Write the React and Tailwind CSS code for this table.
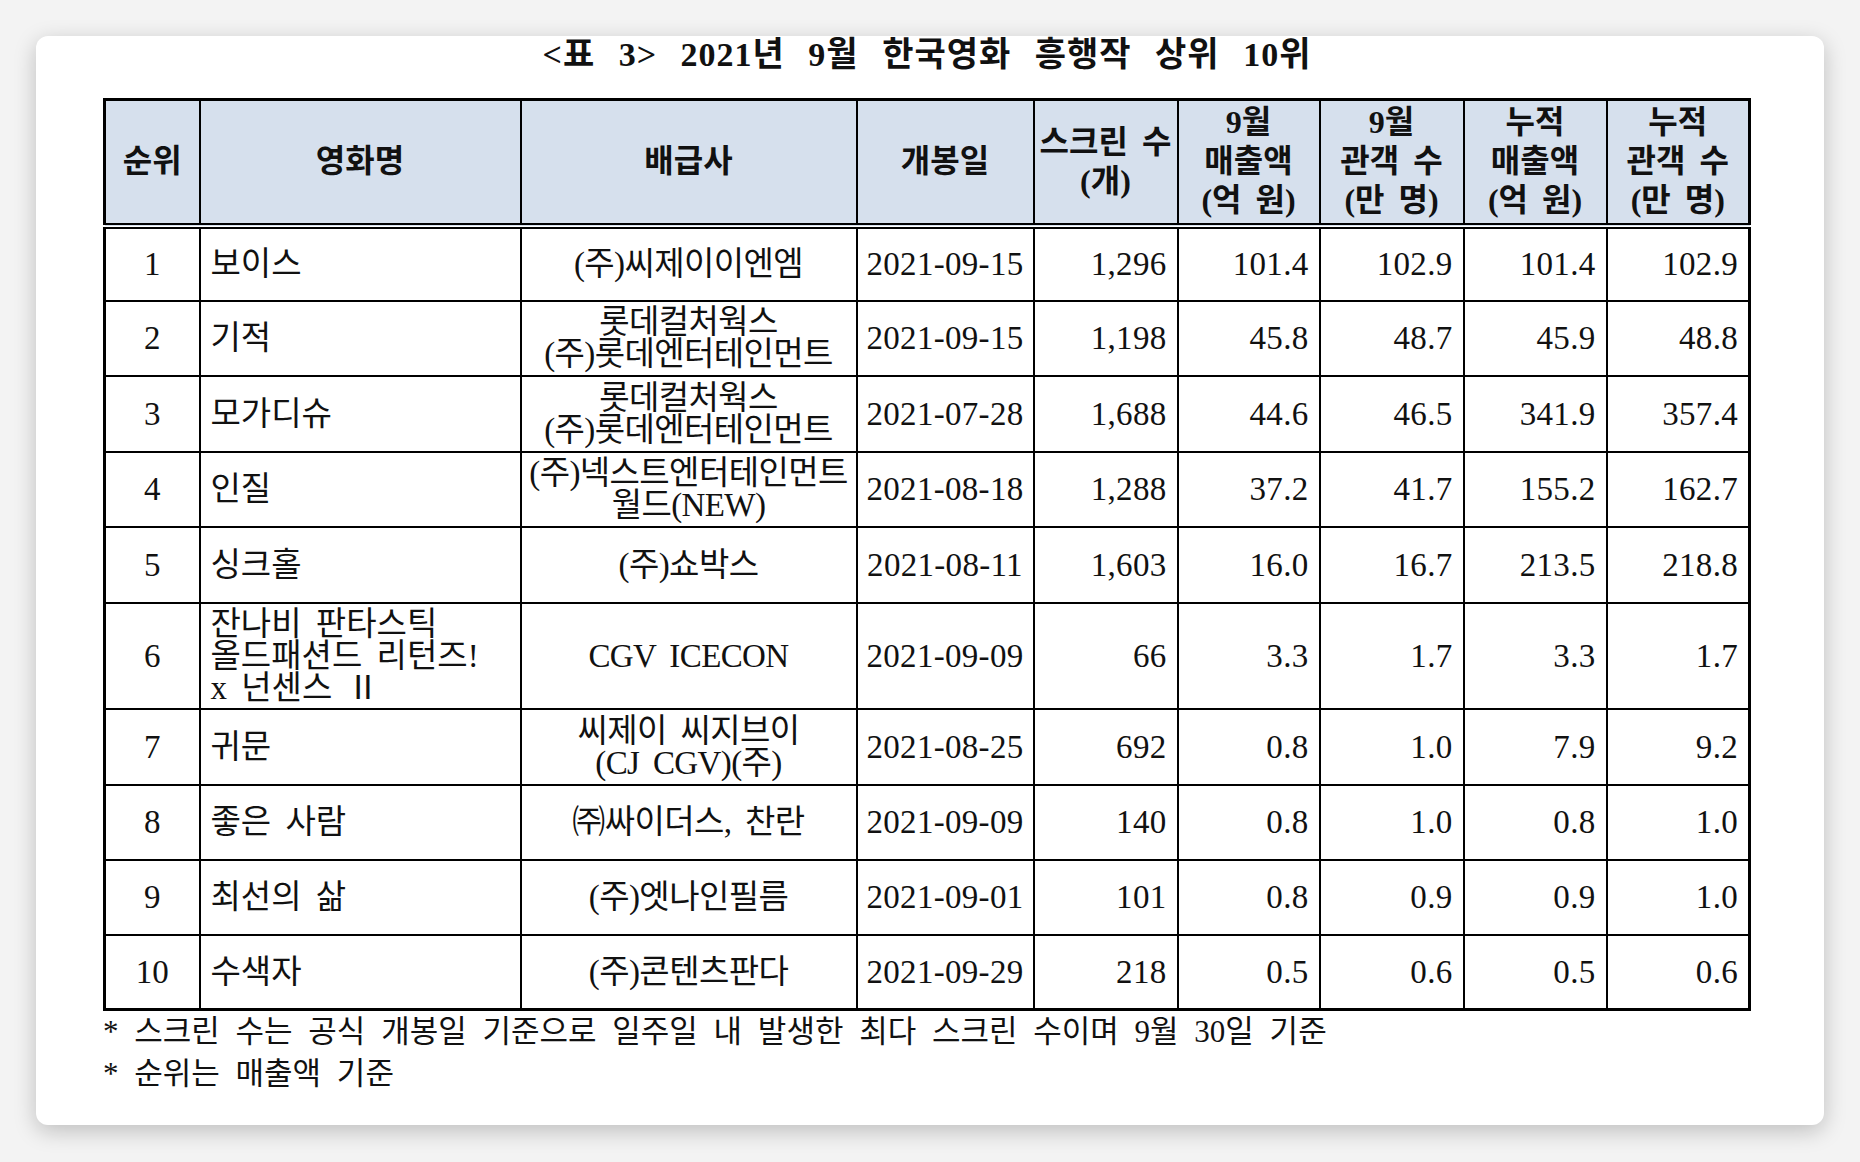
const rows = [
  { rank: "1", title: ["보이스"], dist: ["(주)씨제이이엔엠"], date: "2021-09-15", vals: ["1,296", "101.4", "102.9", "101.4", "102.9"], h: "h-[75px]" },
  { rank: "2", title: ["기적"], dist: ["롯데컬처웍스", "(주)롯데엔터테인먼트"], date: "2021-09-15", vals: ["1,198", "45.8", "48.7", "45.9", "48.8"], h: "h-[75px]" },
  { rank: "3", title: ["모가디슈"], dist: ["롯데컬처웍스", "(주)롯데엔터테인먼트"], date: "2021-07-28", vals: ["1,688", "44.6", "46.5", "341.9", "357.4"], h: "h-[76px]" },
  { rank: "4", title: ["인질"], dist: ["(주)넥스트엔터테인먼트", "월드(NEW)"], date: "2021-08-18", vals: ["1,288", "37.2", "41.7", "155.2", "162.7"], h: "h-[75px]" },
  { rank: "5", title: ["싱크홀"], dist: ["(주)쇼박스"], date: "2021-08-11", vals: ["1,603", "16.0", "16.7", "213.5", "218.8"], h: "h-[76px]" },
  { rank: "6", title: ["잔나비 판타스틱", "올드패션드 리턴즈!", "x 넌센스 Ⅱ"], dist: ["CGV ICECON"], date: "2021-09-09", vals: ["66", "3.3", "1.7", "3.3", "1.7"], h: "h-[106px]" },
  { rank: "7", title: ["귀문"], dist: ["씨제이 씨지브이", "(CJ CGV)(주)"], date: "2021-08-25", vals: ["692", "0.8", "1.0", "7.9", "9.2"], h: "h-[76px]" },
  { rank: "8", title: ["좋은 사람"], dist: ["㈜싸이더스, 찬란"], date: "2021-09-09", vals: ["140", "0.8", "1.0", "0.8", "1.0"], h: "h-[75px]" },
  { rank: "9", title: ["최선의 삶"], dist: ["(주)엣나인필름"], date: "2021-09-01", vals: ["101", "0.8", "0.9", "0.9", "1.0"], h: "h-[75px]" },
  { rank: "10", title: ["수색자"], dist: ["(주)콘텐츠판다"], date: "2021-09-29", vals: ["218", "0.5", "0.6", "0.5", "0.6"], h: "h-[75px]" },
];

const heads = [
  ["순위"],
  ["영화명"],
  ["배급사"],
  ["개봉일"],
  ["스크린 수", "(개)"],
  ["9월", "매출액", "(억 원)"],
  ["9월", "관객 수", "(만 명)"],
  ["누적", "매출액", "(억 원)"],
  ["누적", "관객 수", "(만 명)"],
];

const widths = ["w-[95px]", "w-[321px]", "w-[336px]", "w-[177px]", "w-[144px]", "w-[142px]", "w-[144px]", "w-[143px]", "w-[143px]"];

function Lines({ lines }) {
  return lines.map((l, i) => <div key={i}>{l}</div>);
}

export default function App() {
  return (
    <div className="min-h-screen bg-[#f3f3f3] p-[36px] font-['Liberation_Serif','Noto_Sans_CJK_KR',serif] text-[#111]">
      <div className="h-[1089px] rounded-[12px] bg-white pl-[67px] shadow-[0_6px_22px_rgba(0,0,0,0.22)]">
        <div className="w-[1648px] text-center text-[34px] leading-[38px] font-bold tracking-[1px] [word-spacing:14px]">
          &lt;표 3&gt; 2021년 9월 한국영화 흥행작 상위 10위
        </div>

        <table className="mt-[24px] w-[1648px] table-fixed border-collapse border-[3px] border-black">
          <colgroup>
            {widths.map((w, i) => (
              <col key={i} className={w} />
            ))}
          </colgroup>
          <thead>
            <tr className="h-[126px] bg-[#d6e0ed]">
              {heads.map((h, i) => (
                <th
                  key={i}
                  className="border-2 border-b-[6px] border-black p-0 text-center align-middle text-[32px] leading-[39px] font-bold [border-bottom-style:double] [word-spacing:6px]"
                >
                  <Lines lines={h} />
                </th>
              ))}
            </tr>
          </thead>
          <tbody className="text-[33px] leading-[32px] [word-spacing:6px]">
            {rows.map((r) => (
              <tr key={r.rank} className={r.h}>
                <td className="border-2 border-black p-0 text-center align-middle">{r.rank}</td>
                <td className="border-2 border-black py-0 pl-[10px] text-left align-middle">
                  <Lines lines={r.title} />
                </td>
                <td className="border-2 border-black p-0 text-center align-middle whitespace-nowrap tracking-[-0.6px]">
                  <Lines lines={r.dist} />
                </td>
                <td className="border-2 border-black p-0 text-center align-middle tracking-[0.3px]">{r.date}</td>
                {r.vals.map((v, i) => (
                  <td key={i} className="border-2 border-black py-0 pr-[10px] text-right align-middle tracking-[0.3px]">
                    {v}
                  </td>
                ))}
              </tr>
            ))}
          </tbody>
        </table>

        <div className="text-[31px] leading-[42px] [word-spacing:8px]">
          <div>* 스크린 수는 공식 개봉일 기준으로 일주일 내 발생한 최다 스크린 수이며 9월 30일 기준</div>
          <div>* 순위는 매출액 기준</div>
        </div>
      </div>
    </div>
  );
}
